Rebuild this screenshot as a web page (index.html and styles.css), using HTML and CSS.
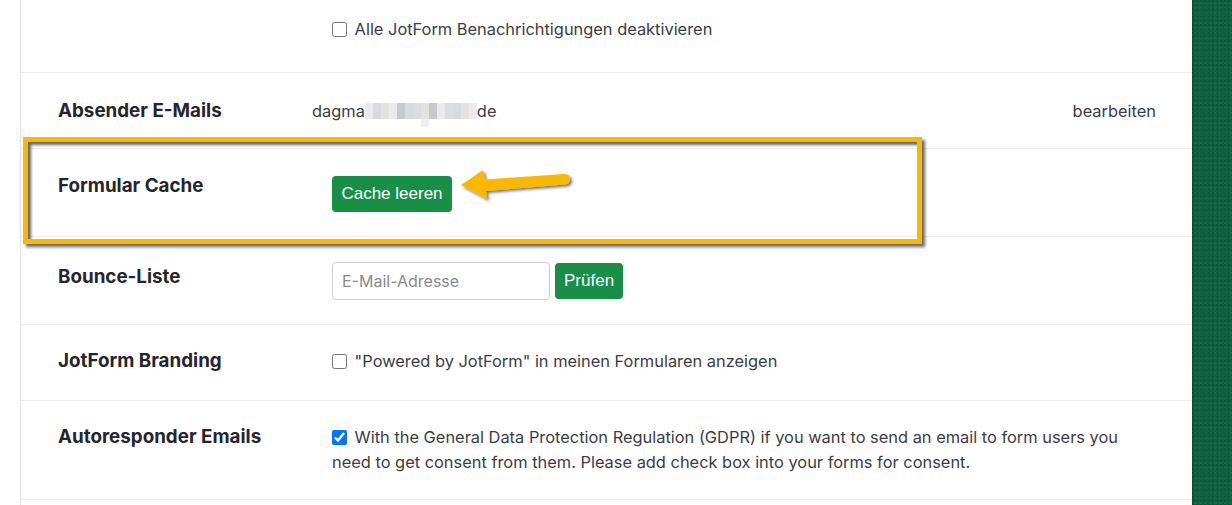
FILE: index.html
```html
<!DOCTYPE html>
<html lang="de">
<head>
<meta charset="utf-8">
<title>Einstellungen</title>
<link rel="stylesheet" href="styles.css">
</head>
<body>
<div class="page">
  <div class="gutter"></div>
  <main class="settings">
    <section class="row row-top">
      <div class="label"></div>
      <div class="value">
        <label class="check"><input type="checkbox"> Alle JotForm Benachrichtigungen deaktivieren</label>
      </div>
    </section>
    <section class="row">
      <div class="label">Absender E-Mails</div>
      <div class="value value-email">
        <span>dagma</span><span class="mosaic"><i class="m1"></i><i class="m2"></i><i class="m3"></i><i class="m1"></i><i class="m4"></i><i class="m2"></i><i class="m5"></i><i class="m3"></i><i class="m4"></i><i class="m1"></i><i class="m5"></i><i class="m2"></i><i class="m3"></i><i class="m1"></i><b class="drip"></b></span><span>de</span>
      </div>
      <a class="edit">bearbeiten</a>
    </section>
    <section class="row">
      <div class="label">Formular Cache</div>
      <div class="value"><button class="btn btn-cache">Cache leeren</button></div>
    </section>
    <section class="row row-bounce">
      <div class="label">Bounce-Liste</div>
      <div class="value inline">
        <input class="email-input" type="text" placeholder="E-Mail-Adresse">
        <button class="btn btn-check">Prüfen</button>
      </div>
    </section>
    <section class="row">
      <div class="label">JotForm Branding</div>
      <div class="value">
        <label class="check"><input type="checkbox"> "Powered by JotForm" in meinen Formularen anzeigen</label>
      </div>
    </section>
    <section class="row">
      <div class="label">Autoresponder Emails</div>
      <div class="value">
        <label class="check check-multi"><input type="checkbox" checked> With the General Data Protection Regulation (GDPR) if you want to send an email to form users you need to get consent from them. Please add check box into your forms for consent.</label>
      </div>
    </section>
    <div class="highlight"></div>
    <svg class="arrow" width="120" height="40" viewBox="0 0 120 40">
      <defs>
        <filter id="sh" x="-20%" y="-40%" width="140%" height="180%">
          <feDropShadow dx="2" dy="2" stdDeviation="1.5" flood-color="#000" flood-opacity="0.55"/>
        </filter>
      </defs>
      <path filter="url(#sh)" fill="#fbb800" d="M1 21 L23 6 L25 15.5 L104 10 Q110 10 110 15 Q110 20 104.5 20.5 L26 27 L27 35 Z"/>
    </svg>
  </main>
  <aside class="strip"></aside>
</div>
</body>
</html>
```

FILE: styles.css
```css
* { box-sizing: border-box; }
html, body { margin: 0; padding: 0; background: #fff; }
body {
  font-family: Inter, Roboto, "Liberation Sans", Arial, sans-serif;
  color: #3a3d42;
  font-size: 16.4px;
  overflow: hidden;
}
.page {
  display: flex;
  height: 505px;
}
.gutter {
  width: 21px;
  border-right: 1px solid #e3e3e3;
  flex: none;
}
.settings {
  flex: 1;
  position: relative;
}
.strip {
  width: 40px;
  flex: none;
  background-color: #0b6242;
  background-image:
    radial-gradient(circle at 20% 30%, rgba(0,0,0,.12) 0 1px, transparent 1.5px),
    radial-gradient(circle at 70% 60%, rgba(255,255,255,.06) 0 1px, transparent 1.5px),
    linear-gradient(90deg, #085236 0, #0b6242 3px);
  background-size: 4px 4px, 5px 5px, 100% 100%;
}
.row {
  display: flex;
  align-items: flex-start;
  padding: 25px 36px 25px 37px;
  border-bottom: 1px solid #ececec;
}
.row-top {
  height: 73px;
  padding-top: 18px;
}
.label {
  width: 274px;
  flex: none;
  font-weight: 700;
  font-size: 18.8px;
  line-height: 22px;
  color: #23262b;
}
.row:nth-child(2) { padding-top: 27px; padding-bottom: 26px; }
.row:nth-child(3) { padding-top: 26px; padding-bottom: 24px; }
.row:nth-child(5) { padding-bottom: 28px; }
.row:nth-child(6) { padding-bottom: 24px; }
.row-bounce { padding-bottom: 24px; }
.row-bounce .label { margin-top: 4px; }
.value {
  flex: 1;
  line-height: 22px;
}
.value.inline {
  display: flex;
  align-items: center;
  gap: 5px;
}
.value-email {
  margin-left: -20px;
  display: flex;
  align-items: center;
  height: 22px;
}
.mosaic {
  position: relative;
  display: inline-flex;
  height: 16px;
}
.mosaic i {
  display: block;
  width: 8px;
  height: 16px;
}
.mosaic .m1 { background: #ebebee; }
.mosaic .m2 { background: #d7dbe0; }
.mosaic .m3 { background: #e4e1de; }
.mosaic .m4 { background: #c9c9cc; }
.mosaic .m5 { background: #dcdde2; }
.mosaic .drip {
  position: absolute;
  left: 56px;
  top: 16px;
  width: 8px;
  height: 8px;
  background: #f0f0f0;
}
.edit {
  margin-left: auto;
  color: #3a3d42;
  line-height: 22px;
  cursor: pointer;
}
.check {
  display: block;
  line-height: 22px;
}
.check input {
  width: 15px;
  height: 15px;
  margin: 0 3px 0 0;
  vertical-align: -2px;
}
.check-multi {
  line-height: 25px;
  margin-top: -1px;
}
.btn {
  font-family: "Liberation Sans", Arial, sans-serif;
  font-size: 17px;
  color: #fff;
  background: #178f47;
  border: none;
  border-radius: 4px;
  height: 36px;
  padding: 0 9px;
  cursor: pointer;
}
.btn-cache { width: 120px; margin-top: 1px; }
.btn-check { width: 68px; }
.email-input {
  width: 218px;
  height: 38px;
  border: 1px solid #cfcfcf;
  border-radius: 4px;
  padding: 0 9px;
  font-family: Inter, Roboto, "Liberation Sans", Arial, sans-serif;
  font-size: 16px;
  color: #333;
}
.email-input::placeholder { color: #8a8a8a; }
.highlight {
  position: absolute;
  left: 2px;
  top: 137px;
  width: 899px;
  height: 107px;
  border: 5px solid #fbb800;
  box-shadow: 3px 3px 3px rgba(0,0,0,.6), inset 3px 3px 3px rgba(0,0,0,.6);
  pointer-events: none;
}
.arrow {
  position: absolute;
  left: 439px;
  top: 164px;
}
```
